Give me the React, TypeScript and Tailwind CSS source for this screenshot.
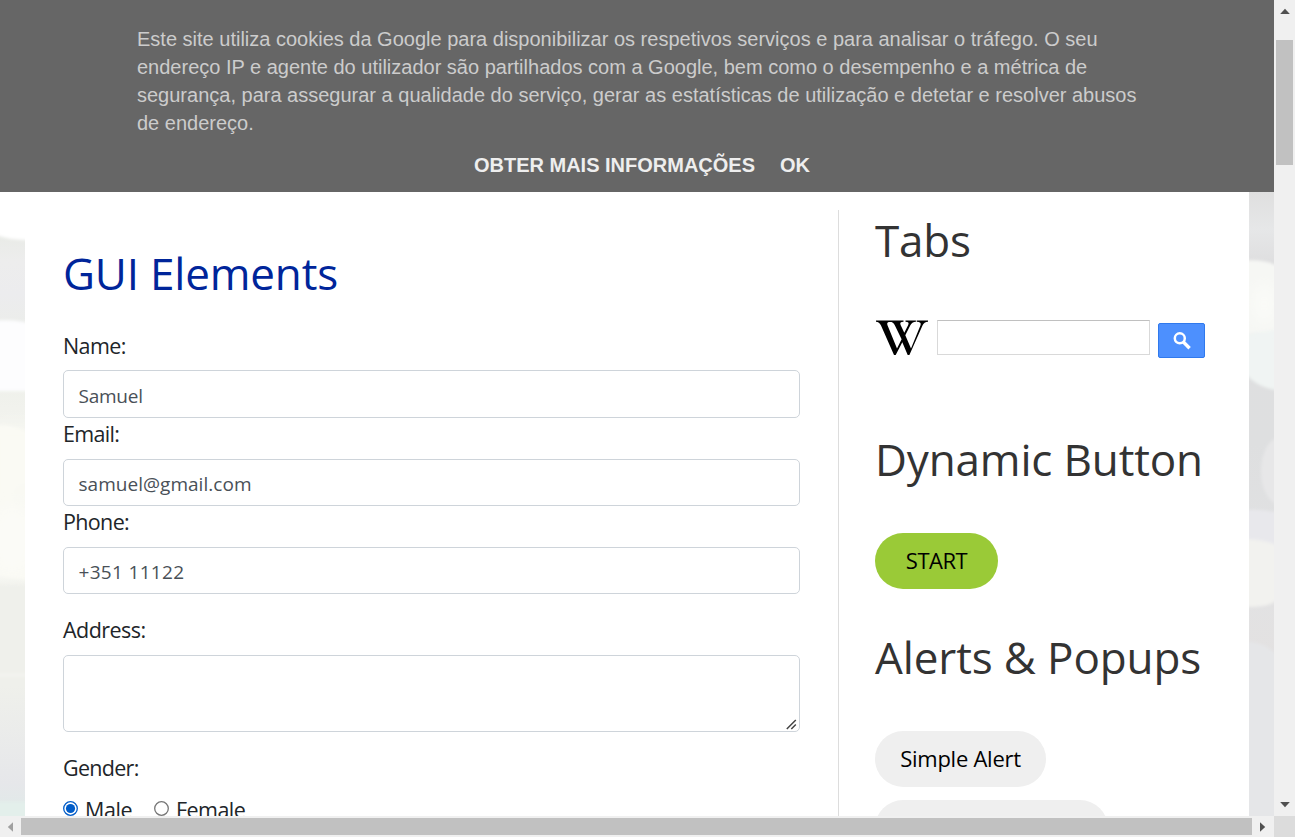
import React from "react";

const fields = [
  { label: "Name:", value: "Samuel", box: "h-12 pt-1", labelCls: "tracking-[-0.6px]", lineCls: "leading-[34px]", valueCls: "tracking-[-0.25px]" },
  { label: "Email:", value: "samuel@gmail.com", box: "h-[47px] pt-[3px]", labelCls: "tracking-[-0.7px]", lineCls: "leading-[32px]", valueCls: "tracking-[0.03px]" },
  { label: "Phone:", value: "+351 11122", box: "h-[47px] pt-[3px]", labelCls: "tracking-[-0.65px]", lineCls: "leading-[32px]", valueCls: "tracking-[0.32px]" },
];

function Backdrop() {
  return (
    <svg className="absolute inset-0 h-full w-full" viewBox="0 0 1274 816" aria-hidden="true">
      <defs>
        <filter id="soft" x="-20%" y="-20%" width="140%" height="140%">
          <feGaussianBlur stdDeviation="1.6" />
        </filter>
        <filter id="softer" x="-50%" y="-50%" width="200%" height="200%">
          <feGaussianBlur stdDeviation="7" />
        </filter>
        <linearGradient id="left" x1="0" y1="0" x2="0" y2="816" gradientUnits="userSpaceOnUse">
          <stop offset="0.29" stopColor="#e9ebe7" />
          <stop offset="0.32" stopColor="#ededed" />
          <stop offset="0.36" stopColor="#ececee" />
          <stop offset="0.43" stopColor="#ebeee7" />
          <stop offset="0.5" stopColor="#f1f2ed" />
          <stop offset="0.6" stopColor="#f7f8f3" />
          <stop offset="0.7" stopColor="#fafaf5" />
          <stop offset="0.72" stopColor="#eff0eb" />
          <stop offset="0.84" stopColor="#eff0eb" />
          <stop offset="0.96" stopColor="#e6e7ea" />
          <stop offset="1" stopColor="#dfeae8" />
        </linearGradient>
        <linearGradient id="right" x1="0" y1="192" x2="0" y2="816" gradientUnits="userSpaceOnUse">
          <stop offset="0" stopColor="#dfdfdf" />
          <stop offset="0.06" stopColor="#e6e7e8" />
          <stop offset="0.11" stopColor="#dfdfe0" />
          <stop offset="0.4" stopColor="#dedfe0" />
          <stop offset="0.65" stopColor="#e2e2e3" />
          <stop offset="0.82" stopColor="#e4e1e0" />
          <stop offset="1" stopColor="#e0e1e3" />
        </linearGradient>
      </defs>
      <rect width="40" height="816" fill="url(#left)" />
      <rect x="1240" y="180" width="34" height="636" fill="url(#right)" />
      <g filter="url(#soft)">
        <path d="M-10 180H50V240H25Q8 240-10 233Z" fill="#ffffff" />
        <path d="M-10 321Q16 318 40 326V391H-10Z" fill="#fdfdfe" />
        <path d="M-10 425Q16 424 30 434V482Q12 486 12 500Q22 520 40 530V579Q14 580-10 572Z" fill="#fafaf4" />
        <path d="M-10 673H40V677H-10Z" fill="#f3f3ee" />
        <path d="M-10 802H40V820H-10Z" fill="#e3efeb" />
        <path d="M1240 261Q1266 258 1284 269V330Q1262 331 1240 336Z" fill="#f6f7f4" />
        <path d="M1240 337Q1264 329 1284 330V391Q1252 389 1240 365Z" fill="#f0f4f3" />
        <ellipse cx="1281" cy="471" rx="20" ry="34" fill="#e7e7e8" />
        <path d="M1240 511Q1262 507 1284 515V545H1240Z" fill="#e8e8ec" />
        <path d="M1240 539Q1269 538 1284 550V596Q1268 610 1240 606Z" fill="#f2f2ef" />
        <path d="M1240 642Q1265 640 1278 657V820H1240Z" fill="#e5e6e8" />
      </g>
      <g filter="url(#softer)">
        <rect x="-10" y="425" width="50" height="150" fill="#fafaf4" opacity="0.6" />
        <ellipse cx="12" cy="540" rx="22" ry="34" fill="#fbfbf7" />
        <ellipse cx="1264" cy="304" rx="12" ry="20" fill="#fafbf8" />
      </g>
    </svg>
  );
}

function CookieBanner() {
  return (
    <div className="absolute inset-x-0 top-0 z-10 flex h-48 flex-col items-center bg-[#666666] pt-[25px] font-['Liberation_Sans',Arial,sans-serif] text-[20px] leading-7">
      <p className="w-[1000px] text-[#cccccc]">
        Este site utiliza cookies da Google para disponibilizar os respetivos serviços e para analisar o tráfego. O seu
        <br />
        endereço IP e agente do utilizador são partilhados com a Google, bem como o desempenho e a métrica de
        <br />
        segurança, para assegurar a qualidade do serviço, gerar as estatísticas de utilização e detetar e resolver abusos
        <br />
        de endereço.
      </p>
      <div className="mt-[14px] flex gap-[25px] pl-[10px] font-bold text-[#eeeeee]">
        <a>OBTER MAIS INFORMAÇÕES</a>
        <a>OK</a>
      </div>
    </div>
  );
}

function GuiForm() {
  return (
    <section className="w-[737px] pt-[51px] text-[21.5px] text-[#212529]">
      <h1 className="mb-[26px] h-[60px] text-[44px] leading-[60px] text-[#00259a]">
        <span className="tracking-[-0.18px]">GUI Elements</span>
      </h1>
      {fields.map((f) => (
        <div key={f.label}>
          <div className={`mb-2 h-[33px] ${f.lineCls}`}>
            <span className={f.labelCls}>{f.label}</span>
          </div>
          <div className={`flex items-center rounded-[5px] border border-[#ced4da] px-[14.5px] text-[19px] text-[#495057] ${f.box}`}>
            <span className={f.valueCls}>{f.value}</span>
          </div>
        </div>
      ))}
      <div className="mt-5 mb-2 h-[33px] leading-[32px]">
        <span className="tracking-[-0.55px]">Address:</span>
      </div>
      <div className="flex h-[77px] items-end justify-end rounded-[5px] border border-[#ced4da]">
        <svg className="mr-[2px] mb-[1px] h-[11px] w-[11px]" viewBox="0 0 11 11" fill="none" stroke="#444" strokeWidth="1.5">
          <path d="M.8 10L9.800 1M5.300 10L9.800 5.500" />
        </svg>
      </div>
      <div className="mt-5 h-[33px] leading-[32px]">
        <span className="tracking-[-0.7px]">Gender:</span>
      </div>
      <div className="mt-2 flex h-[33px] items-start leading-[34px]">
        <Radio checked />
        <span className="ml-[7px] w-[69px] tracking-[-0.4px]">Male</span>
        <Radio />
        <span className="ml-[7px] tracking-[-0.55px]">Female</span>
      </div>
    </section>
  );
}

function Radio({ checked = false }: { checked?: boolean }) {
  return (
    <svg className="mt-[8px] h-[15px] w-[15px] shrink-0" viewBox="0 0 15 15">
      <circle cx="7.5" cy="7.5" r="6.8" fill="#fff" stroke={checked ? "#005cc8" : "#767676"} strokeWidth="1.3" />
      {checked && <circle cx="7.5" cy="7.5" r="4.6" fill="#005cc8" />}
    </svg>
  );
}

function Sidebar() {
  return (
    <aside className="ml-[38px] flex-1 border-l border-[#dddddd] pl-9 text-[#333333]">
      <h2 className="h-[60px] text-[44px] leading-[60px]"><span className="tracking-[-0.18px]">Tabs</span></h2>
      <div className="mt-[50px] flex h-[38px] items-start">
        <svg className="h-9 w-[54px]" viewBox="0 0 54 36" aria-label="Wikipedia">
          <path d="M1 .5h14.500v1.300q-4.500.2-3 3.400L22 28.500l4.600-9.200L19.800 5.200q-1.600-3.200-4.700-3.400V.5h13.400v1.300q-4.300.1-2.900 3.200l3.700 7.800L33.200 5q1.500-3.100-2.700-3.200V.5h10.400v1.300q-4 .3-5.700 3.700l-4.900 9.800L36 28.500 45.500 5.300q1.300-3.400-3.800-3.500V.5H53v1.300q-4 .3-5.500 3.700L34.400 35h-1.700L27.300 22.200 20.700 35H19L6 5.500Q4.300 2 1 1.800Z" fill="#000" />
        </svg>
        <div className="ml-2 h-[35px] w-[213px] border border-[#d9d9d9] border-t-[#c0c0c0] bg-white" />
        <button className="mt-[3px] ml-2 flex h-[35px] w-[47px] items-center justify-center rounded-[2px] border border-[#3079ed] bg-[#4d90fe]">
          <svg className="h-[18px] w-[18px]" viewBox="0 0 18 18" fill="none" stroke="#fff">
            <circle cx="6.800" cy="6.300" r="5" strokeWidth="2.500" />
            <path d="M10.400 10L16.600 16.200" strokeWidth="3.400" />
          </svg>
        </button>
      </div>
      <h2 className="mt-[71px] h-[60px] text-[44px] leading-[60px]"><span className="tracking-[-0.15px]">Dynamic Button</span></h2>
      <button className="mt-[44px] flex h-14 w-[123px] items-center justify-center rounded-[28px] bg-[#9aca37] pb-0.5 text-[22px] text-black">
        <span className="tracking-[-0.5px]">START</span>
      </button>
      <h2 className="mt-[38px] h-[60px] text-[44px] leading-[60px]"><span className="tracking-[-0.12px]">Alerts &amp; Popups</span></h2>
      <button className="mt-[44px] flex h-14 w-[171px] items-center justify-center rounded-[28px] bg-[#efefef] pb-0.5 text-[22px] text-black">
        <span className="tracking-[-0.25px]">Simple Alert</span>
      </button>
      <button className="mt-[13px] block h-14 w-[233px] rounded-[28px] bg-[#efefef]" />
    </aside>
  );
}

function Arrow({ d, fill = "#505050" }: { d: string; fill?: string }) {
  return (
    <svg className="h-[10px] w-[10px] shrink-0" viewBox="0 0 10 10" fill={fill}>
      <path d={d} />
    </svg>
  );
}

export default function App() {
  return (
    <div className="grid h-[837px] w-[1295px] grid-cols-[1274px_21px] grid-rows-[816px_21px] overflow-hidden bg-[#f0f0f0] font-['Open_Sans','Noto_Sans',sans-serif]">
      <div className="relative h-[816px] overflow-hidden bg-white">
        <Backdrop />
        <CookieBanner />
        <main className="relative mx-[25px] flex h-[816px] overflow-hidden bg-white px-[38px] pt-[192px]">
          <GuiForm />
          <div className="flex flex-1 pt-[18px]">
            <Sidebar />
          </div>
        </main>
      </div>
      <div className="flex flex-col items-center pt-[7px] pb-[7px]">
        <Arrow d="M5 1.800L9.800 7H.2Z" />
        <div className="mt-[23px] h-[125px] w-[17px] bg-[#c1c1c1]" />
        <div className="mt-auto">
          <Arrow d="M.2 3H9.800L5 8.200Z" />
        </div>
      </div>
      <div className="flex items-center pr-[7px] pl-[6px]">
        <Arrow d="M7 .2V9.800L1.800 5Z" fill="#a0a0a0" />
        <div className="ml-[5px] h-[17px] w-[1231px] bg-[#c1c1c1]" />
        <div className="ml-auto">
          <Arrow d="M3 .2L8.200 5 3 9.800Z" />
        </div>
      </div>
      <div className="bg-[#dcdcdc]" />
    </div>
  );
}
